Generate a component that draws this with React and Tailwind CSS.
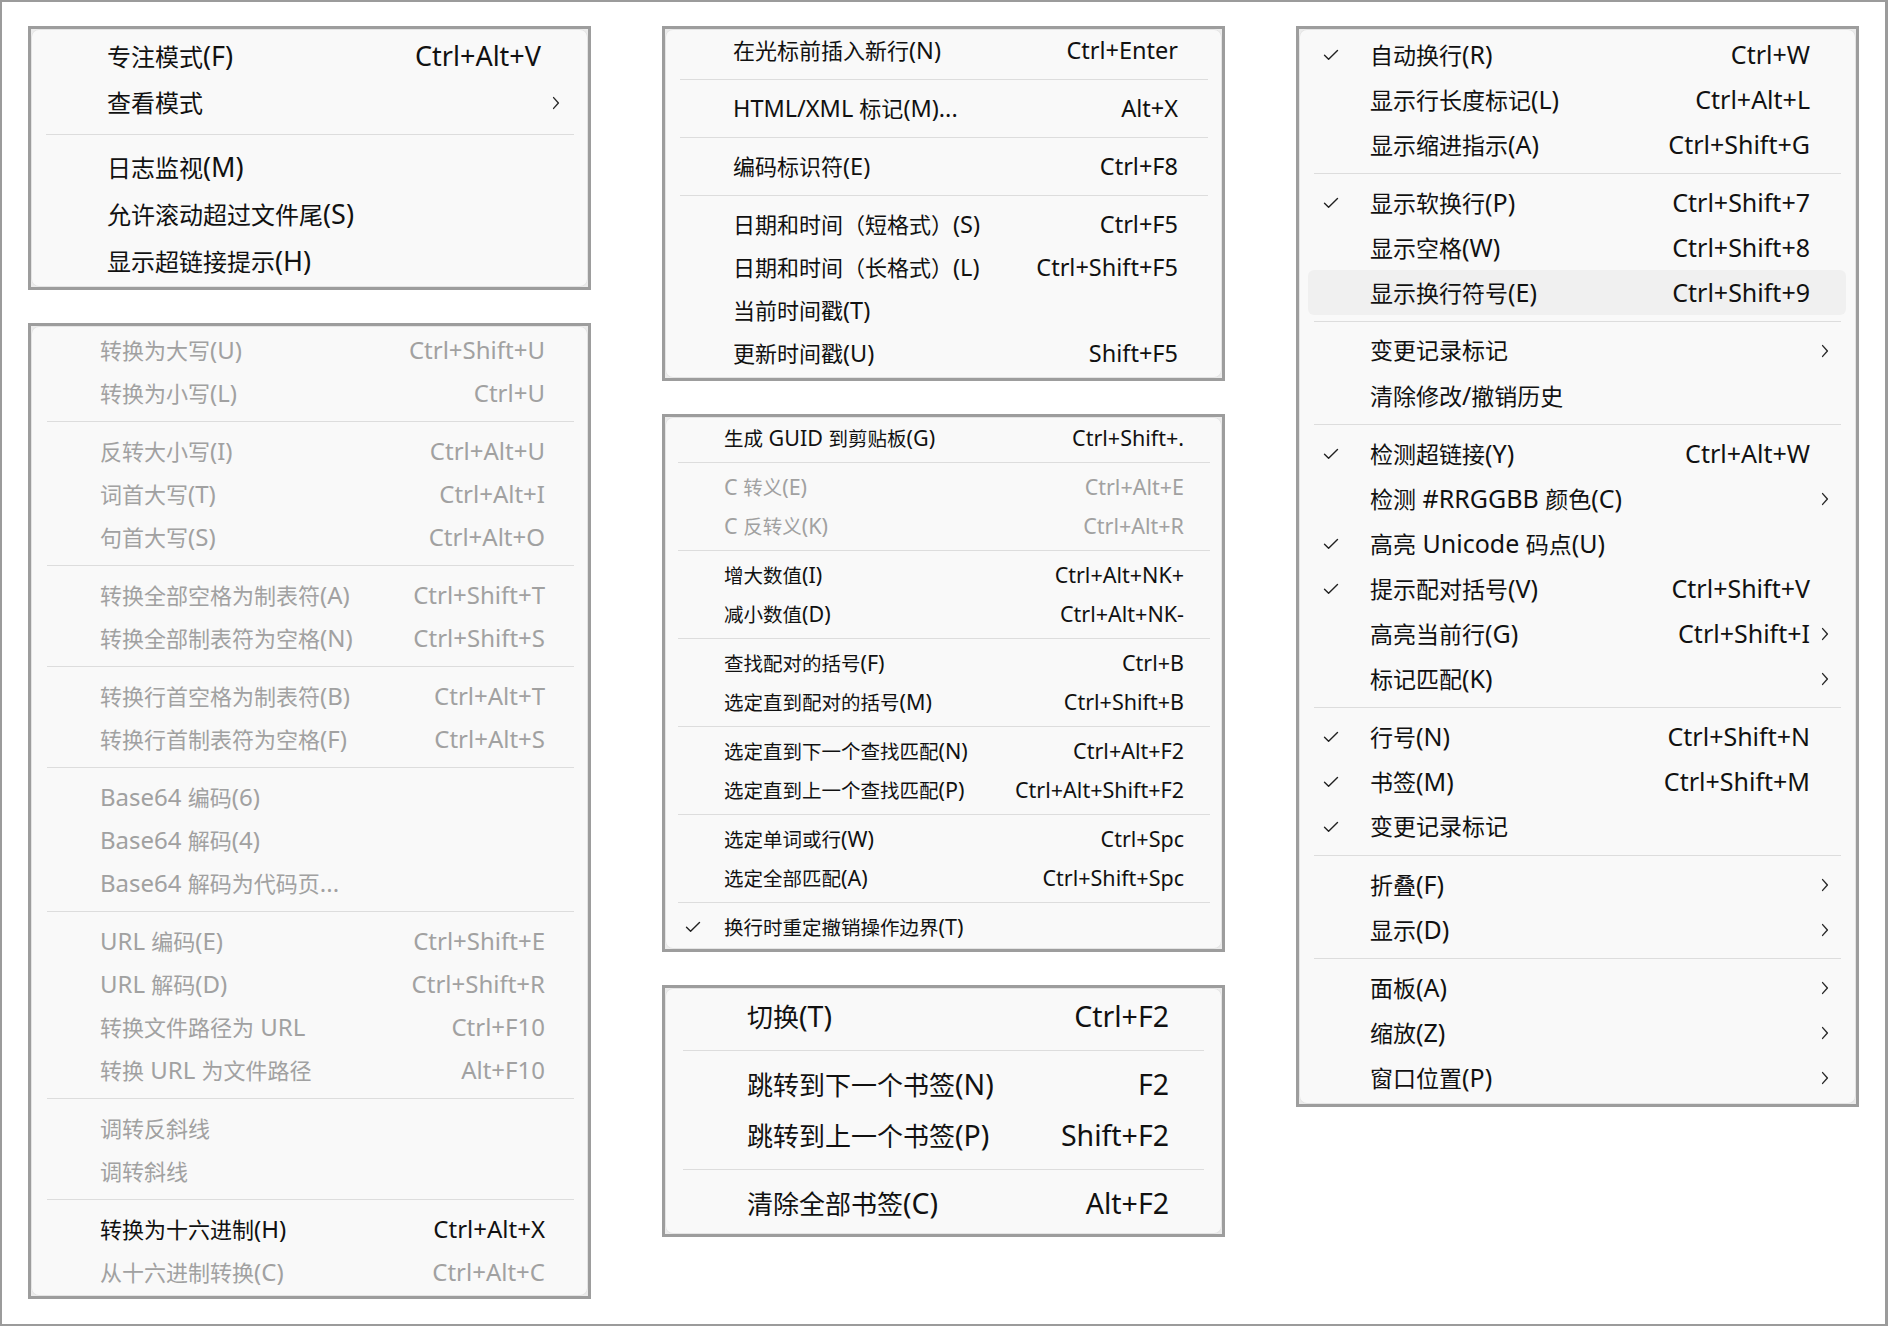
import React from 'react';

const SEP = 'sep';

const viewMenu = [
  { label: '专注模式(F)', shortcut: 'Ctrl+Alt+V' },
  { label: '查看模式', sub: true },
  SEP,
  { label: '日志监视(M)' },
  { label: '允许滚动超过文件尾(S)' },
  { label: '显示超链接提示(H)' },
];

const convertMenu = [
  { label: '转换为大写(U)', shortcut: 'Ctrl+Shift+U', disabled: true },
  { label: '转换为小写(L)', shortcut: 'Ctrl+U', disabled: true },
  SEP,
  { label: '反转大小写(I)', shortcut: 'Ctrl+Alt+U', disabled: true },
  { label: '词首大写(T)', shortcut: 'Ctrl+Alt+I', disabled: true },
  { label: '句首大写(S)', shortcut: 'Ctrl+Alt+O', disabled: true },
  SEP,
  { label: '转换全部空格为制表符(A)', shortcut: 'Ctrl+Shift+T', disabled: true },
  { label: '转换全部制表符为空格(N)', shortcut: 'Ctrl+Shift+S', disabled: true },
  SEP,
  { label: '转换行首空格为制表符(B)', shortcut: 'Ctrl+Alt+T', disabled: true },
  { label: '转换行首制表符为空格(F)', shortcut: 'Ctrl+Alt+S', disabled: true },
  SEP,
  { label: 'Base64 编码(6)', disabled: true },
  { label: 'Base64 解码(4)', disabled: true },
  { label: 'Base64 解码为代码页...', disabled: true },
  SEP,
  { label: 'URL 编码(E)', shortcut: 'Ctrl+Shift+E', disabled: true },
  { label: 'URL 解码(D)', shortcut: 'Ctrl+Shift+R', disabled: true },
  { label: '转换文件路径为 URL', shortcut: 'Ctrl+F10', disabled: true },
  { label: '转换 URL 为文件路径', shortcut: 'Alt+F10', disabled: true },
  SEP,
  { label: '调转反斜线', disabled: true },
  { label: '调转斜线', disabled: true },
  SEP,
  { label: '转换为十六进制(H)', shortcut: 'Ctrl+Alt+X' },
  { label: '从十六进制转换(C)', shortcut: 'Ctrl+Alt+C', disabled: true },
];

const insertMenu = [
  { label: '在光标前插入新行(N)', shortcut: 'Ctrl+Enter' },
  SEP,
  { label: 'HTML/XML 标记(M)...', shortcut: 'Alt+X' },
  SEP,
  { label: '编码标识符(E)', shortcut: 'Ctrl+F8' },
  SEP,
  { label: '日期和时间（短格式）(S)', shortcut: 'Ctrl+F5' },
  { label: '日期和时间（长格式）(L)', shortcut: 'Ctrl+Shift+F5' },
  { label: '当前时间戳(T)' },
  { label: '更新时间戳(U)', shortcut: 'Shift+F5' },
];

const editMenu = [
  { label: '生成 GUID 到剪贴板(G)', shortcut: 'Ctrl+Shift+.' },
  SEP,
  { label: 'C 转义(E)', shortcut: 'Ctrl+Alt+E', disabled: true },
  { label: 'C 反转义(K)', shortcut: 'Ctrl+Alt+R', disabled: true },
  SEP,
  { label: '增大数值(I)', shortcut: 'Ctrl+Alt+NK+' },
  { label: '减小数值(D)', shortcut: 'Ctrl+Alt+NK-' },
  SEP,
  { label: '查找配对的括号(F)', shortcut: 'Ctrl+B' },
  { label: '选定直到配对的括号(M)', shortcut: 'Ctrl+Shift+B' },
  SEP,
  { label: '选定直到下一个查找匹配(N)', shortcut: 'Ctrl+Alt+F2' },
  { label: '选定直到上一个查找匹配(P)', shortcut: 'Ctrl+Alt+Shift+F2' },
  SEP,
  { label: '选定单词或行(W)', shortcut: 'Ctrl+Spc' },
  { label: '选定全部匹配(A)', shortcut: 'Ctrl+Shift+Spc' },
  SEP,
  { label: '换行时重定撤销操作边界(T)', checked: true },
];

const bookmarkMenu = [
  { label: '切换(T)', shortcut: 'Ctrl+F2' },
  SEP,
  { label: '跳转到下一个书签(N)', shortcut: 'F2' },
  { label: '跳转到上一个书签(P)', shortcut: 'Shift+F2' },
  SEP,
  { label: '清除全部书签(C)', shortcut: 'Alt+F2' },
];

const displayMenu = [
  { label: '自动换行(R)', shortcut: 'Ctrl+W', checked: true },
  { label: '显示行长度标记(L)', shortcut: 'Ctrl+Alt+L' },
  { label: '显示缩进指示(A)', shortcut: 'Ctrl+Shift+G' },
  SEP,
  { label: '显示软换行(P)', shortcut: 'Ctrl+Shift+7', checked: true },
  { label: '显示空格(W)', shortcut: 'Ctrl+Shift+8' },
  { label: '显示换行符号(E)', shortcut: 'Ctrl+Shift+9', hover: true },
  SEP,
  { label: '变更记录标记', sub: true },
  { label: '清除修改/撤销历史' },
  SEP,
  { label: '检测超链接(Y)', shortcut: 'Ctrl+Alt+W', checked: true },
  { label: '检测 #RRGGBB 颜色(C)', sub: true },
  { label: '高亮 Unicode 码点(U)', checked: true },
  { label: '提示配对括号(V)', shortcut: 'Ctrl+Shift+V', checked: true },
  { label: '高亮当前行(G)', shortcut: 'Ctrl+Shift+I', sub: true },
  { label: '标记匹配(K)', sub: true },
  SEP,
  { label: '行号(N)', shortcut: 'Ctrl+Shift+N', checked: true },
  { label: '书签(M)', shortcut: 'Ctrl+Shift+M', checked: true },
  { label: '变更记录标记', checked: true },
  SEP,
  { label: '折叠(F)', sub: true },
  { label: '显示(D)', sub: true },
  SEP,
  { label: '面板(A)', sub: true },
  { label: '缩放(Z)', sub: true },
  { label: '窗口位置(P)', sub: true },
];

// per-panel metrics, measured from the screenshot (each capture has its own scale)
// sc = size for latin text, which renders larger than the CJK glyphs in the original
const sizes = {
  view: { font: 'text-[24px]', sc: 'text-[27px]', row: 'h-[47px]', sep: 'h-[17px] ml-[15px] mr-[14px]', pad: 'py-[3px]', lead: 'w-[76px] pl-[24px]', trail: 'w-[47px] pr-[28px]' },
  convert: { font: 'text-[22px]', sc: 'text-[24px]', row: 'h-[43px]', sep: 'h-[15px] ml-[16px] mr-[14px]', pad: 'pt-[2px] pb-[3px]', lead: 'w-[69px] pl-[22px]', trail: 'w-[43px] pr-[26px]' },
  insert: { font: 'text-[22px]', sc: 'text-[23.5px]', row: 'h-[43px]', sep: 'h-[15px] ml-[15px] mr-[14px]', pad: 'pt-[0px] pb-[3px]', lead: 'w-[68px] pl-[22px]', trail: 'w-[44px] pr-[26px]' },
  edit: { font: 'text-[19.5px]', sc: 'text-[21.5px]', row: 'h-[39px]', sep: 'h-[10px] ml-[13px] mr-[12px]', pad: 'pt-[1px] pb-[3px]', lead: 'w-[59px] pl-[20px]', trail: 'w-[38px] pr-[22px]' },
  bookmark: { font: 'text-[26px]', sc: 'text-[28.5px]', row: 'h-[51px]', sep: 'h-[17px] ml-[18px] mr-[18px]', pad: 'pt-[3px] pb-[5px]', lead: 'w-[82px] pl-[26px]', trail: 'w-[53px] pr-[30px]' },
  display: { font: 'text-[23px]', sc: 'text-[25px]', row: 'h-[45px]', sep: 'h-[13px] ml-[15px] mr-[15px]', pad: 'pt-[3px] pb-[4px]', lead: 'w-[71px] pl-[24px]', trail: 'w-[46px] pr-[27px]' },
};

const CheckIcon = () => (
  <svg width="16" height="12" viewBox="0 0 16 12" fill="none">
    <path d="M1.5 6.2 L5.6 10.3 L14.5 1.6" stroke="#222222" strokeWidth="1.4" strokeLinecap="round" strokeLinejoin="round" />
  </svg>
);

const Chevron = () => (
  <svg width="8" height="14" viewBox="0 0 8 14" fill="none">
    <path d="M1.6 1.6 L6.4 7 L1.6 12.4" stroke="#2a2a2a" strokeWidth="1.4" strokeLinecap="round" strokeLinejoin="round" />
  </svg>
);

// split a label into runs so the latin parts get the larger size
const Label = ({ text, latin }) =>
  text.split(/([\x20-\x7E]+)/).filter(Boolean).map((part, i) =>
    /^[\x20-\x7E]+$/.test(part) ? (
      <span key={i} className={latin}>{part}</span>
    ) : (
      <span key={i}>{part}</span>
    )
  );

const MenuRow = ({ item, size }) => {
  const color = item.disabled ? 'text-[#a1a1a1]' : 'text-[#111111]';
  return (
    <div className={`relative flex items-center ${size.row} ${color}`}>
      {item.hover && <div className="absolute inset-y-0 left-[9px] right-[10px] rounded-[6px] bg-[#f0f0f0]" />}
      <div className={`relative shrink-0 flex items-center ${size.lead}`}>{item.checked && <CheckIcon />}</div>
      <span className="relative flex-1 whitespace-pre">
        <Label text={item.label} latin={size.sc} />
      </span>
      {item.shortcut && <span className={`relative whitespace-nowrap ${size.sc}`}>{item.shortcut}</span>}
      <div className={`relative shrink-0 flex items-center justify-end ${size.trail}`}>{item.sub && <Chevron />}</div>
    </div>
  );
};

const Menu = ({ items, size }) => (
  <div className="border-[3px] border-[#9d9d9d] bg-[#ececec]">
    <div className={`rounded-[8px] bg-[#f9f9f9] shadow-[inset_0_0_0_1px_#e4e4e4] ${size.pad} ${size.font}`}>
      {items.map((item, i) =>
        item === SEP ? (
          <div key={i} className={`flex items-center ${size.sep}`}>
            <div className="h-px w-full bg-[#dddddd]" />
          </div>
        ) : (
          <MenuRow key={i} item={item} size={size} />
        )
      )}
    </div>
  </div>
);

export default function App() {
  return (
    <div className="w-[1888px] h-[1326px] border-2 border-r-[3px] border-[#9b9b9b] bg-white font-['Noto_Sans','Noto_Sans_CJK_SC',sans-serif] leading-none">
      <div className="flex items-start gap-[71px] pl-[26px] pt-[24px]">
        <div className="w-[563px] flex flex-col gap-[33px]">
          <Menu items={viewMenu} size={sizes.view} />
          <Menu items={convertMenu} size={sizes.convert} />
        </div>
        <div className="w-[563px] flex flex-col gap-[33px]">
          <Menu items={insertMenu} size={sizes.insert} />
          <Menu items={editMenu} size={sizes.edit} />
          <Menu items={bookmarkMenu} size={sizes.bookmark} />
        </div>
        <div className="w-[563px] flex flex-col">
          <Menu items={displayMenu} size={sizes.display} />
        </div>
      </div>
    </div>
  );
}
